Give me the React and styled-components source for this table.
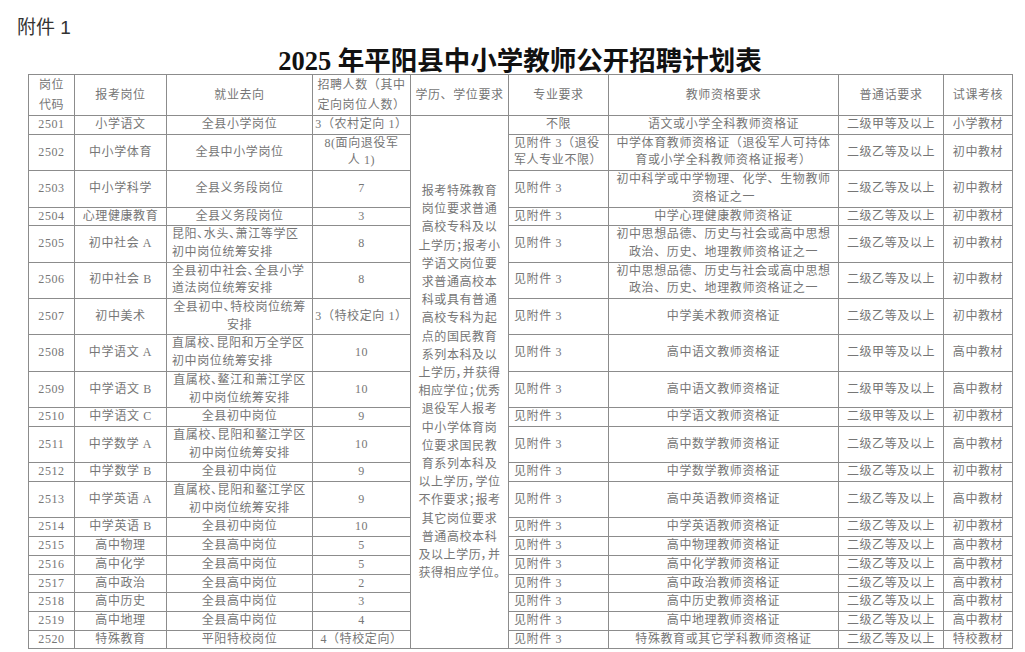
import React from "react";
import styled, { createGlobalStyle } from "styled-components";

const GlobalStyle = createGlobalStyle`
  html, body {
    margin: 0;
    padding: 0;
    background: #ffffff;
  }
`;

const Page = styled.div`
  width: 1025px;
  height: 652px;
  padding: 15px 0 0 17px;
  box-sizing: border-box;
  overflow: hidden;
  background: #fff;
`;

const Attachment = styled.div`
  font-family: "Liberation Sans", "Noto Sans CJK SC", sans-serif;
  font-size: 19px;
  line-height: 26px;
  color: #333;
`;

const Title = styled.h1`
  width: 984px;
  margin: 0 0 0 11px;
  padding-top: 7px;
  font-family: "Liberation Serif", "Noto Sans CJK SC", serif;
  font-size: 26.5px;
  line-height: 26px;
  font-weight: 700;
  color: #111;
  text-align: center;
`;

const Sheet = styled.table`
  width: 984px;
  margin-left: 11px;
  table-layout: fixed;
  border-collapse: collapse;
  font-family: "Liberation Serif", "Noto Sans CJK SC", serif;
  font-size: 12px;
  letter-spacing: 0.6px;
  color: #767676;
`;

const Col = styled.col`
  width: ${(p) => p.$w}px;
`;

const HeadCell = styled.th`
  border: 1px solid #8c8c8c;
  padding: 0;
  font-weight: 400;
  line-height: 20px;
  text-align: center;
  vertical-align: middle;
  white-space: nowrap;
`;

const Cell = styled.td`
  border: 1px solid #8c8c8c;
  padding: 0 ${(p) => (p.$align === "left" ? "4px 0 5px" : "0")};
  line-height: 17.7px;
  text-align: ${(p) => p.$align || "center"};
  vertical-align: middle;
  white-space: nowrap;
  overflow: hidden;
  font-feature-settings: ${(p) => (p.$tight ? '"palt"' : "normal")};
`;

const NoteCell = styled.td`
  border: 1px solid #8c8c8c;
  padding: 0;
  line-height: 18.2px;
  text-align: center;
  vertical-align: middle;
  white-space: nowrap;
  font-feature-settings: "palt";
`;

const lines = (text) =>
  text.split("\n").map((t, i, arr) => (
    <React.Fragment key={i}>
      {t}
      {i < arr.length - 1 && <br />}
    </React.Fragment>
  ));

const widths = [46, 92, 146, 98, 98, 100, 230, 105, 69];

const headers = [
  "岗位\n代码",
  "报考岗位",
  "就业去向",
  "招聘人数（其中\n定向岗位人数）",
  "学历、学位要求",
  "专业要求",
  "教师资格要求",
  "普通话要求",
  "试课考核",
];

const note = [
  "报考特殊教育",
  "岗位要求普通",
  "高校专科及以",
  "上学历；报考小",
  "学语文岗位要",
  "求普通高校本",
  "科或具有普通",
  "高校专科为起",
  "点的国民教育",
  "系列本科及以",
  "上学历，并获得",
  "相应学位；优秀",
  "退役军人报考",
  "中小学体育岗",
  "位要求国民教",
  "育系列本科及",
  "以上学历，学位",
  "不作要求；报考",
  "其它岗位要求",
  "普通高校本科",
  "及以上学历，并",
  "获得相应学位。",
];

const SOCIAL = "初中思想品德、历史与社会或高中思想\n政治、历史、地理教师资格证之一";
const SEE = "见附件 3";

const rows = [
  { code: "2501", post: "小学语文", dest: "全县小学岗位", count: "3（农村定向 1）", major: "不限", majorAlign: "center", cert: "语文或小学全科教师资格证", pth: "二级甲等及以上", trial: "小学教材" },
  { code: "2502", post: "中小学体育", dest: "全县中小学岗位", count: "8(面向退役军\n人 1)", major: "见附件 3（退役\n军人专业不限）", cert: "中学体育教师资格证（退役军人可持体\n育或小学全科教师资格证报考）", pth: "二级乙等及以上", trial: "初中教材" },
  { code: "2503", post: "中小学科学", dest: "全县义务段岗位", count: "7", major: SEE, cert: "初中科学或中学物理、化学、生物教师\n资格证之一", pth: "二级乙等及以上", trial: "初中教材" },
  { code: "2504", post: "心理健康教育", dest: "全县义务段岗位", count: "3", major: SEE, cert: "中学心理健康教师资格证", pth: "二级乙等及以上", trial: "初中教材" },
  { code: "2505", post: "初中社会 A", dest: "昆阳、水头、萧江等学区\n初中岗位统筹安排", destAlign: "left", count: "8", major: SEE, cert: SOCIAL, pth: "二级乙等及以上", trial: "初中教材" },
  { code: "2506", post: "初中社会 B", dest: "全县初中社会、全县小学\n道法岗位统筹安排", destAlign: "left", count: "8", major: SEE, cert: SOCIAL, pth: "二级乙等及以上", trial: "初中教材" },
  { code: "2507", post: "初中美术", dest: "全县初中、特校岗位统筹\n安排", count: "3（特校定向 1）", major: SEE, cert: "中学美术教师资格证", pth: "二级乙等及以上", trial: "初中教材" },
  { code: "2508", post: "中学语文 A", dest: "直属校、昆阳和万全学区\n初中岗位统筹安排", destAlign: "left", count: "10", major: SEE, cert: "高中语文教师资格证", pth: "二级甲等及以上", trial: "高中教材" },
  { code: "2509", post: "中学语文 B", dest: "直属校、鳌江和萧江学区\n初中岗位统筹安排", count: "10", major: SEE, cert: "高中语文教师资格证", pth: "二级甲等及以上", trial: "高中教材" },
  { code: "2510", post: "中学语文 C", dest: "全县初中岗位", count: "9", major: SEE, cert: "中学语文教师资格证", pth: "二级甲等及以上", trial: "初中教材" },
  { code: "2511", post: "中学数学 A", dest: "直属校、昆阳和鳌江学区\n初中岗位统筹安排", count: "10", major: SEE, cert: "高中数学教师资格证", pth: "二级乙等及以上", trial: "高中教材" },
  { code: "2512", post: "中学数学 B", dest: "全县初中岗位", count: "9", major: SEE, cert: "中学数学教师资格证", pth: "二级乙等及以上", trial: "初中教材" },
  { code: "2513", post: "中学英语 A", dest: "直属校、昆阳和鳌江学区\n初中岗位统筹安排", count: "9", major: SEE, cert: "高中英语教师资格证", pth: "二级乙等及以上", trial: "高中教材" },
  { code: "2514", post: "中学英语 B", dest: "全县初中岗位", count: "10", major: SEE, cert: "中学英语教师资格证", pth: "二级乙等及以上", trial: "初中教材" },
  { code: "2515", post: "高中物理", dest: "全县高中岗位", count: "5", major: SEE, cert: "高中物理教师资格证", pth: "二级乙等及以上", trial: "高中教材" },
  { code: "2516", post: "高中化学", dest: "全县高中岗位", count: "5", major: SEE, cert: "高中化学教师资格证", pth: "二级乙等及以上", trial: "高中教材" },
  { code: "2517", post: "高中政治", dest: "全县高中岗位", count: "2", major: SEE, cert: "高中政治教师资格证", pth: "二级乙等及以上", trial: "高中教材" },
  { code: "2518", post: "高中历史", dest: "全县高中岗位", count: "3", major: SEE, cert: "高中历史教师资格证", pth: "二级乙等及以上", trial: "高中教材" },
  { code: "2519", post: "高中地理", dest: "全县高中岗位", count: "4", major: SEE, cert: "高中地理教师资格证", pth: "二级乙等及以上", trial: "高中教材" },
  { code: "2520", post: "特殊教育", dest: "平阳特校岗位", count: "4（特校定向）", major: SEE, cert: "特殊教育或其它学科教师资格证", pth: "二级乙等及以上", trial: "特校教材" },
];

const App = () => {
  return (
    <Page>
      <GlobalStyle />
      <Attachment>附件 1</Attachment>
      <Title>2025 年平阳县中小学教师公开招聘计划表</Title>
      <Sheet>
        <colgroup>
          {widths.map((w, i) => (
            <Col key={i} $w={w} />
          ))}
        </colgroup>
        <thead>
          <tr>
            {headers.map((h, i) => (
              <HeadCell key={i}>{lines(h)}</HeadCell>
            ))}
          </tr>
        </thead>
        <tbody>
          {rows.map((r, index) => (
            <tr key={r.code}>
              <Cell>{r.code}</Cell>
              <Cell>{r.post}</Cell>
              <Cell $align={r.destAlign} $tight>
                {lines(r.dest)}
              </Cell>
              <Cell>{lines(r.count)}</Cell>
              {index === 0 && (
                <NoteCell rowSpan={rows.length}>{lines(note.join("\n"))}</NoteCell>
              )}
              <Cell $align={r.majorAlign || "left"}>{lines(r.major)}</Cell>
              <Cell>{lines(r.cert)}</Cell>
              <Cell>{r.pth}</Cell>
              <Cell>{r.trial}</Cell>
            </tr>
          ))}
        </tbody>
      </Sheet>
    </Page>
  );
};

export default App;
